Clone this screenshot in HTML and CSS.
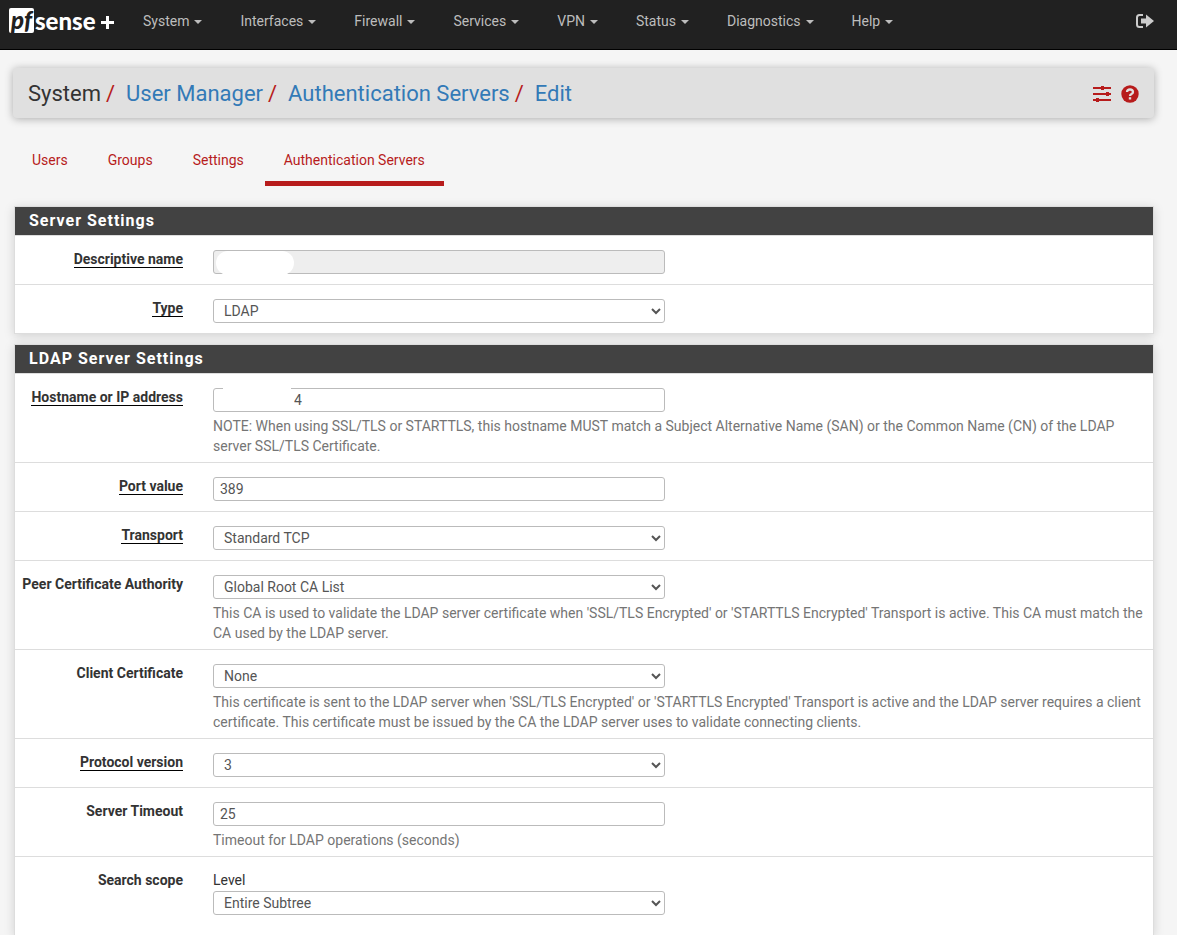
FILE: index.html
```html
<!DOCTYPE html>
<html lang="en">
<head>
  <meta charset="UTF-8">
  <meta name="viewport" content="width=device-width, initial-scale=1.0">
  <title>System: User Manager: Authentication Servers: Edit</title>
  <link rel="stylesheet" href="styles.css">
</head>
<body>
  <nav class="navbar">
    <a class="brand" href="#" aria-label="pfSense Plus home">
      <span class="brand-box">pf</span>
      <span class="brand-name">sense</span>
      <svg class="brand-plus" width="13" height="13" viewBox="0 0 13 13"><path d="M5 0h3v5h5v3H8v5H5V8H0V5h5z" fill="#fff"/></svg>
    </a>
    <ul class="menu">
      <li><a href="#">System <span class="caret"></span></a></li>
      <li><a href="#">Interfaces <span class="caret"></span></a></li>
      <li><a href="#">Firewall <span class="caret"></span></a></li>
      <li><a href="#">Services <span class="caret"></span></a></li>
      <li><a href="#">VPN <span class="caret"></span></a></li>
      <li><a href="#">Status <span class="caret"></span></a></li>
      <li><a href="#">Diagnostics <span class="caret"></span></a></li>
      <li><a href="#">Help <span class="caret"></span></a></li>
    </ul>
    <a class="logout" href="#" aria-label="Logout">
      <svg width="18" height="14" viewBox="0 0 18 14">
        <path d="M7 1H3.500Q1 1 1 3.500V10.500Q1 13 3.500 13H7" fill="none" stroke="#ccc" stroke-width="2"/>
        <path d="M5 4.500h5V0.500L18 7l-8 6.500V9.500H5z" fill="#ccc"/>
      </svg>
    </a>
  </nav>

  <div class="container">
    <header class="header">
      <ol class="breadcrumb">
        <li>System</li>
        <li><a href="#">User Manager</a></li>
        <li><a href="#">Authentication Servers</a></li>
        <li><a href="#">Edit</a></li>
      </ol>
      <div class="context-links">
        <a href="#" aria-label="Related settings">
          <svg width="18" height="16" viewBox="0 0 18 16" fill="#b71c1c">
            <path d="M0 1h18v2H0zM0 7h18v2H0zM0 13h18v2H0z"/>
            <path d="M8 0l3 0v4H8zM13 6h3v4h-3zM3 12h3v4H3z"/>
          </svg>
        </a>
        <a href="#" aria-label="Help">
          <svg width="18" height="18" viewBox="0 0 18 18">
            <circle cx="9" cy="9" r="8.700" fill="#b71c1c"/>
            <path d="M6 7Q6.200 4.500 9 4.500T12 7Q12 8.200 10.500 9T9 11" fill="none" stroke="#e0e0e0" stroke-width="2.300"/>
            <path d="M7.800 12.200h2.400v2.300H7.800z" fill="#e0e0e0"/>
          </svg>
        </a>
      </div>
    </header>

    <ul class="tabs">
      <li><a href="#">Users</a></li>
      <li><a href="#">Groups</a></li>
      <li><a href="#">Settings</a></li>
      <li class="active"><a href="#">Authentication Servers</a></li>
    </ul>

    <form class="form">
      <section class="panel">
        <h2 class="panel-title">Server Settings</h2>
        <div class="row">
          <label class="label" for="name"><span class="required">Descriptive name</span></label>
          <div class="field">
            <input class="control" type="text" id="name" readonly>
            <span class="mask mask-name"></span>
          </div>
        </div>
        <div class="row">
          <label class="label" for="type"><span class="required">Type</span></label>
          <div class="field">
            <select class="control" id="type"><option>LDAP</option><option>RADIUS</option></select>
          </div>
        </div>
      </section>

      <section class="panel panel-last">
        <h2 class="panel-title">LDAP Server Settings</h2>
        <div class="row">
          <label class="label" for="host"><span class="required">Hostname or IP address</span></label>
          <div class="field">
            <input class="control control-host" type="text" id="host" value="4">
            <span class="mask mask-host"></span>
            <p class="help">NOTE: When using SSL/TLS or STARTTLS, this hostname MUST match a Subject Alternative Name (SAN) or the Common Name (CN) of the LDAP server SSL/TLS Certificate.</p>
          </div>
        </div>
        <div class="row">
          <label class="label" for="port"><span class="required">Port value</span></label>
          <div class="field">
            <input class="control" type="text" id="port" value="389">
          </div>
        </div>
        <div class="row">
          <label class="label" for="transport"><span class="required">Transport</span></label>
          <div class="field">
            <select class="control" id="transport"><option>Standard TCP</option><option>STARTTLS Encrypted</option><option>SSL/TLS Encrypted</option></select>
          </div>
        </div>
        <div class="row">
          <label class="label" for="ca">Peer Certificate Authority</label>
          <div class="field">
            <select class="control" id="ca"><option>Global Root CA List</option></select>
            <p class="help">This CA is used to validate the LDAP server certificate when 'SSL/TLS Encrypted' or 'STARTTLS Encrypted' Transport is active. This CA must match the CA used by the LDAP server.</p>
          </div>
        </div>
        <div class="row">
          <label class="label" for="cert">Client Certificate</label>
          <div class="field">
            <select class="control" id="cert"><option>None</option></select>
            <p class="help">This certificate is sent to the LDAP server when 'SSL/TLS Encrypted' or 'STARTTLS Encrypted' Transport is active and the LDAP server requires a client certificate. This certificate must be issued by the CA the LDAP server uses to validate connecting clients.</p>
          </div>
        </div>
        <div class="row">
          <label class="label" for="protocol"><span class="required">Protocol version</span></label>
          <div class="field">
            <select class="control" id="protocol"><option>3</option><option>2</option></select>
          </div>
        </div>
        <div class="row">
          <label class="label" for="timeout">Server Timeout</label>
          <div class="field">
            <input class="control" type="text" id="timeout" value="25">
            <p class="help">Timeout for LDAP operations (seconds)</p>
          </div>
        </div>
        <div class="row">
          <span class="label">Search scope</span>
          <div class="field">
            <label class="sub-label" for="scope">Level</label>
            <select class="control" id="scope"><option>Entire Subtree</option><option>One Level</option></select>
          </div>
        </div>
      </section>
    </form>
  </div>
</body>
</html>
```
FILE: styles.css
```css
* {
  box-sizing: border-box;
}
body {
  display: flex;
  flex-direction: column;
  min-height: 100vh;
  margin: 0;
  font-family: Roboto, sans-serif;
  font-size: 14px;
  line-height: 20px;
  color: #333;
  background-color: #f5f5f5;
}
a {
  color: #337ab7;
  text-decoration: none;
}
ul, ol {
  list-style: none;
  margin: 0;
  padding: 0;
}

/* top menu */
.navbar {
  display: flex;
  align-items: flex-start;
  height: 50px;
  padding: 0 23px 0 9px;
  background-color: #212121;
  border-bottom: 1px solid #000;
}
.brand {
  display: flex;
  align-items: center;
  width: 115px;
  margin-top: 8px;
  color: #fff;
}
.brand-box {
  width: 25px;
  height: 25px;
  border-radius: 2px;
  background-color: #fff;
  color: #212121;
  font: italic 900 24px/23px Lato, sans-serif;
  text-align: center;
}
.brand-name {
  margin-left: 1px;
  font: 900 24px/24px Lato, sans-serif;
}
.brand-plus {
  margin: 4px 0 0 5px;
}
.menu {
  display: flex;
  flex: 1;
}
.menu a {
  display: flex;
  align-items: center;
  padding: 11px 19px;
  color: #bdbdbd;
}
.caret {
  margin: 1px 0 0 5px;
  border-top: 4px solid;
  border-left: 4px solid transparent;
  border-right: 4px solid transparent;
}
.logout {
  margin-top: 14px;
  line-height: 14px;
}
.logout svg, .context-links svg {
  display: block;
}

.container {
  display: flex;
  flex-direction: column;
  flex: 1;
  padding: 18px 23px 0 13px;
}

/* breadcrumb */
.header {
  display: flex;
  align-items: center;
  justify-content: space-between;
  height: 50px;
  padding: 2px 15px 0;
  border-radius: 4px;
  background-color: #e0e0e0;
  box-shadow: 0 1px 8px rgba(0, 0, 0, 0.3);
}
.breadcrumb {
  display: flex;
  font-size: 22px;
  line-height: 30px;
}
.breadcrumb li + li::before {
  content: "/";
  padding: 0 11px 0 5px;
  color: #b71c1c;
}
.context-links {
  display: flex;
  align-items: center;
  gap: 10px;
}

/* tabs */
.tabs {
  display: flex;
  gap: 2px;
  margin: 20px 0;
}
.tabs a {
  display: block;
  padding: 12px 19px 11px;
  border-bottom: 5px solid transparent;
  color: #b71c1c;
}
.tabs .active a {
  border-color: #b71c1c;
}

/* panels */
.form {
  display: flex;
  flex-direction: column;
  flex: 1;
  gap: 10px;
  margin-left: 1px;
}
.panel {
  border: 1px solid #ddd;
  background-color: #fff;
  box-shadow: 0 2px 10px rgba(0, 0, 0, 0.15);
}
.panel-last {
  flex: 1;
  border-bottom: 0;
}
.panel-title {
  margin: 0;
  padding: 4px 14px;
  background-color: #424242;
  color: #fff;
  font-size: 16px;
  line-height: 20px;
  letter-spacing: 1px;
}
.row {
  display: flex;
  gap: 30px;
  padding: 13px 8px 6px 0;
  border-top: 1px solid #ddd;
}
.label {
  flex: 0 0 168px;
  text-align: right;
  font-weight: bold;
}
.required {
  border-bottom: 1px solid #000;
}
.field {
  position: relative;
  flex: 1;
}
.control {
  display: block;
  width: 452px;
  max-width: 100%;
  height: 24px;
  margin: 1px 0 4px;
  padding: 0 6px 1px;
  border: 1px solid #bbb;
  border-radius: 3px;
  background-color: #fff;
  color: #555;
  font: 14px Roboto, sans-serif;
}
.control:read-only:not(select) {
  background-color: #eee;
}
.control-host {
  padding-left: 80px;
}
.help {
  margin: 0;
  color: #757575;
}
.sub-label {
  display: block;
}

/* blanked-out values */
.mask {
  position: absolute;
  background-color: #fff;
}
.mask-name {
  top: 2px;
  left: 3px;
  width: 78px;
  height: 24px;
  border-radius: 12px;
}
.mask-host {
  top: -1px;
  left: 10px;
  width: 68px;
  height: 20px;
}
```
